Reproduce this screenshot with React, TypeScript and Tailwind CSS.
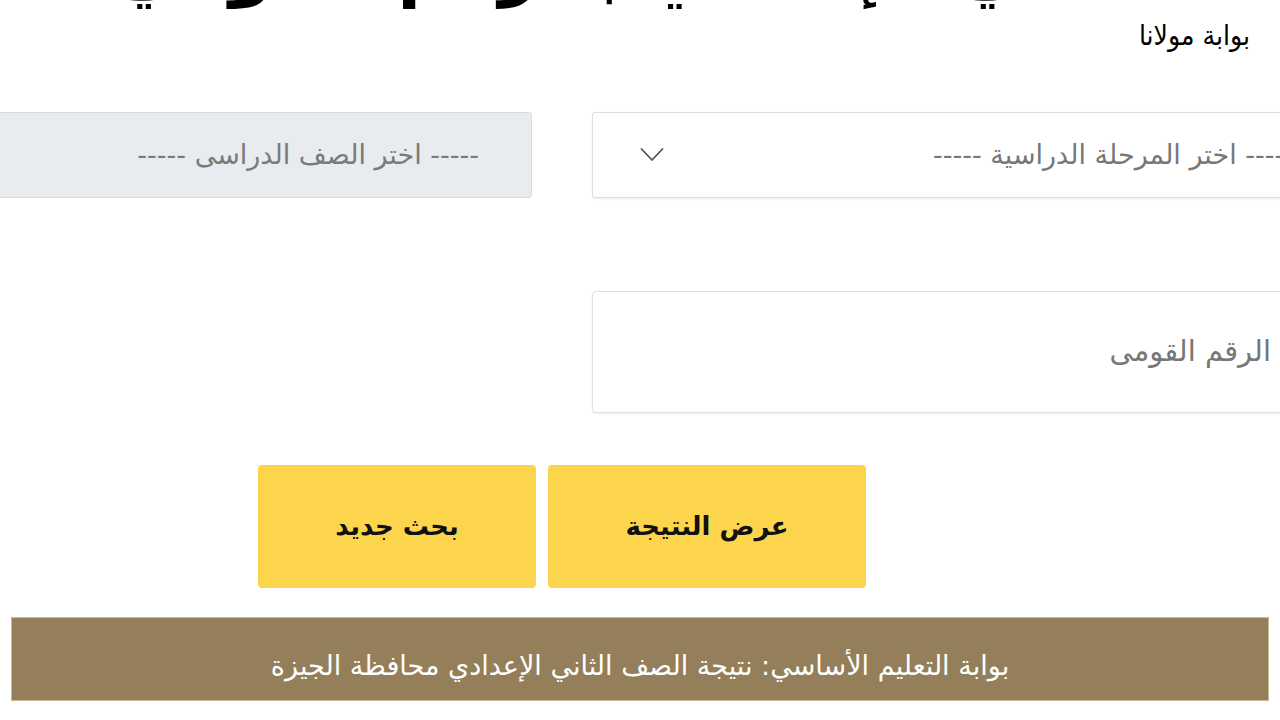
const font = { fontFamily: '"DejaVu Sans", "Noto Sans", sans-serif' };

function Chevron() {
  return (
    <svg width="24" height="16" viewBox="0 0 24 16" fill="none" className="text-[#555]">
      <path d="M1.5 2 L12 13 L22.5 2" stroke="currentColor" strokeWidth="1.8" strokeLinecap="round" strokeLinejoin="round" />
    </svg>
  );
}

export default function App() {
  return (
    <div dir="rtl" className="relative h-[720px] w-[1280px] overflow-hidden bg-white" style={font}>
      {/* cropped page heading */}
      <div className="mr-[-65px] flex h-[12px] w-[1566px] items-end justify-center overflow-hidden">
        <h1 className="whitespace-nowrap pl-[40px] text-[70px] font-bold leading-[1.25] text-black">
          نتيجة الصف الثاني الإعدادي بالرقم القومي محافظة الجيزة
        </h1>
      </div>

      <div className="flex h-[100px] pr-[30px] pt-[6px]">
        <span className="text-[28px] leading-[36px] text-black [text-shadow:0_0_2px_#fff,0_0_2px_#fff]" style={{ fontFamily: '"DejaVu Sans Condensed", "DejaVu Sans", sans-serif' }}>
          بوابة مولانا
        </span>
      </div>

      <div className="mr-[-65px] w-[1566px]">
        <div className="grid grid-cols-2 gap-[60px]">
          <div className="flex h-[86px] items-center justify-between rounded-[3px] border border-[#dedede] bg-white pl-[47px] pr-[50px] text-[27px] text-[#777] shadow-[0_1px_2px_rgba(0,0,0,0.08)]">
            <span>----- اختر المرحلة الدراسية -----</span>
            <Chevron />
          </div>
          <div className="flex h-[86px] items-center rounded-[3px] border border-[#d8dbde] bg-[#e9ecef] pr-[52px] text-[27px] text-[#7a7a7a]">
            <span>----- اختر الصف الدراسى -----</span>
          </div>
        </div>

        <div className="mt-[93px] grid grid-cols-2 gap-[60px]">
          <div className="flex h-[122px] items-center rounded-[4px] border border-[#e0e0e0] bg-white pr-[73px] text-[29px] text-[#777] shadow-[0_1px_2px_rgba(0,0,0,0.08)]">
            <span>الرقم القومى</span>
          </div>
          <div />
        </div>

        <div className="mt-[52px] flex justify-center gap-[12px]">
          <button className="flex h-[123px] w-[318px] items-center justify-center rounded-[4px] bg-[#fcd54c] text-[26px] font-bold text-[#111]">
            عرض النتيجة
          </button>
          <button className="flex h-[123px] w-[278px] items-center justify-center rounded-[4px] bg-[#fcd54c] text-[26px] font-bold text-[#111]">
            بحث جديد
          </button>
        </div>
      </div>

      <div className="mx-[11px] mt-[29px] flex h-[84px] items-center justify-center border border-[#c9b995] bg-[#947f5a] pt-[14px] text-[27px] text-white">
        بوابة التعليم الأساسي: نتيجة الصف الثاني الإعدادي محافظة الجيزة
      </div>
    </div>
  );
}
